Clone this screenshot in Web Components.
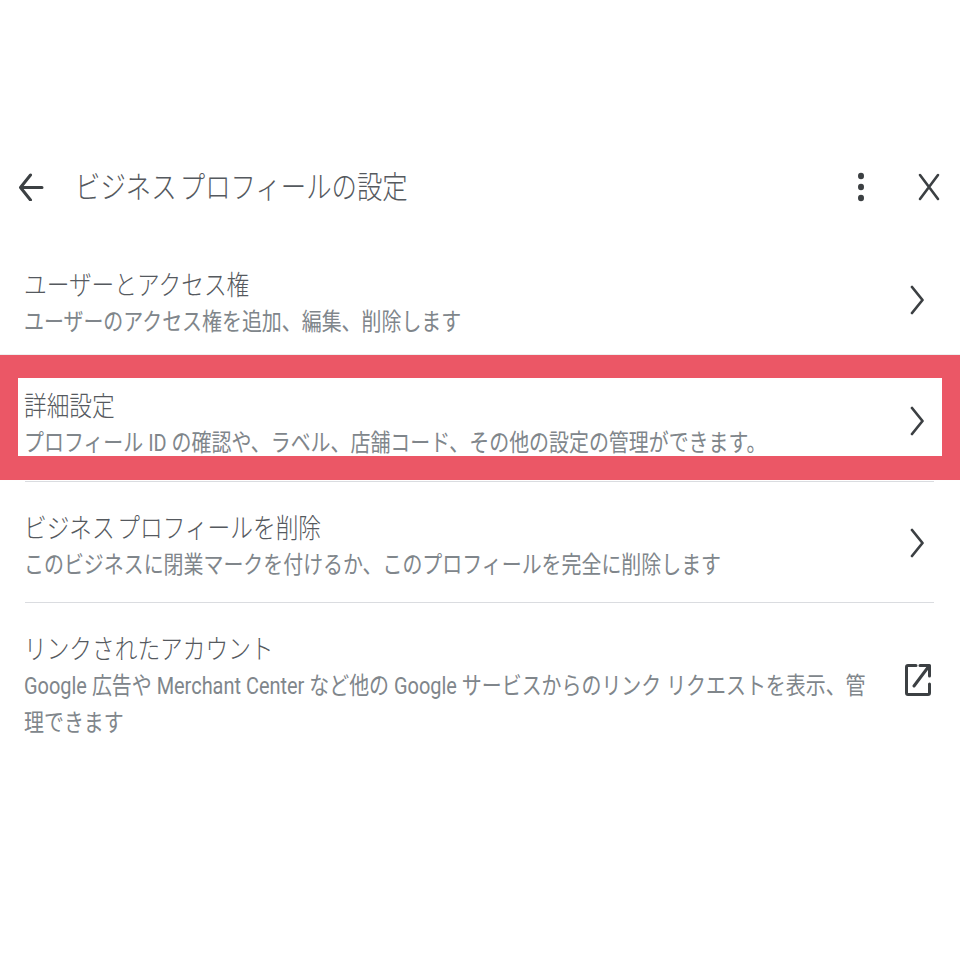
<!DOCTYPE html>
<html lang="ja"><head><meta charset="utf-8"><title>ビジネス プロフィールの設定</title>
<style>html,body{margin:0;background:#fff}body{font-family:Roboto,"Noto Sans CJK JP",sans-serif}</style>
</head><body>
<gbp-panel>
  <gbp-header>ビジネス プロフィールの設定</gbp-header>
  <gbp-row title="ユーザーとアクセス権" sub="ユーザーのアクセス権を追加、編集、削除します"></gbp-row>
  <gbp-row title="詳細設定" sub="プロフィール ID の確認や、ラベル、店舗コード、その他の設定の管理ができます。"></gbp-row>
  <gbp-row title="ビジネス プロフィールを削除" sub="このビジネスに閉業マークを付けるか、このプロフィールを完全に削除します"></gbp-row>
  <gbp-row title="リンクされたアカウント" sub="Google 広告や Merchant Center など他の Google サービスからのリンク リクエストを表示、管理できます" icon="external" last></gbp-row>
  <gbp-highlight></gbp-highlight>
</gbp-panel>
<script>
const shadow=(el,html)=>{el.attachShadow({mode:'open'}).innerHTML=html};
customElements.define('gbp-panel',class extends HTMLElement{connectedCallback(){shadow(this,`<style>
:host{display:block;position:relative;width:960px;height:960px;padding-top:155px;box-sizing:border-box;background:#fff;overflow:hidden}
</style><slot></slot>`)}});
customElements.define('gbp-header',class extends HTMLElement{connectedCallback(){shadow(this,`<style>
:host{display:flex;align-items:center;height:64px;margin-bottom:19.5px;color:#5f6368}
.back{width:28px;height:28px;margin-left:17px;flex:none}
.t{flex:1;margin-left:30px;font-size:25.4px;line-height:64px;font-weight:300;word-spacing:-3px;white-space:nowrap;transform:scaleY(1.22);transform-origin:center;color:#55595e}
.more{width:8px;height:30px;flex:none;margin-right:53px}
.close{width:22px;height:28px;flex:none;margin-right:20px}
svg{display:block;fill:none;stroke:#3c4043;stroke-linecap:round;stroke-linejoin:round}
</style>
<svg class="back" viewBox="0 0 28 28" stroke-width="3"><path d="M25 14.500H4M13.500 2 3.500 14.500 13.500 27"/></svg>
<div class="t"><slot></slot></div>
<svg class="more" viewBox="0 0 8 30" style="fill:#3c4043;stroke:none"><ellipse cx="4" cy="4" rx="3" ry="3.300"/><ellipse cx="4" cy="15" rx="3" ry="3.300"/><ellipse cx="4" cy="26" rx="3" ry="3.300"/></svg>
<svg class="close" viewBox="0 0 22 28" stroke-width="2.600"><path d="M2 2 20 26M20 2 2 26"/></svg>`)}});
customElements.define('gbp-row',class extends HTMLElement{connectedCallback(){
const ext=this.getAttribute('icon')==='external';
const icon=ext?`<svg class="ext" viewBox="0 0 26 34" stroke-width="3"><path d="M11 2.500H3a1.500 1.500 0 0 0-1.500 1.500v26A1.500 1.500 0 0 0 3 31.500h20a1.500 1.500 0 0 0 1.500-1.500v-9"/><path d="M24.500 13V2.500H15M24 3 9 23"/></svg>`
:`<svg class="chev" viewBox="0 0 14 30" stroke-width="2.700"><path d="M2 2 12.500 15 2 28"/></svg>`;
shadow(this,`<style>
:host{display:flex;justify-content:space-between;box-sizing:border-box;height:121.5px;margin:0 26px 0 25px;border-bottom:1px solid #dadce0}
:host([last]){border-bottom:0}
.text{width:845px;margin-left:-1px;padding-top:24.6px;transform:scaleY(1.2);transform-origin:top left}
.title{font-size:22.7px;line-height:29.4px;color:#55595e;font-weight:300;word-spacing:-3px;white-space:nowrap}
.sub{font-size:19.95px;line-height:30.8px;color:#80868b;font-weight:400}
svg{display:block;flex:none;fill:none;stroke:#3c4043;stroke-linecap:round;stroke-linejoin:round}
.chev{width:14px;height:30px;margin:46px 10px 0 0}
.ext{width:26px;height:34px;margin:60px 3px 0 0}
</style><div class="text"><div class="title">${this.getAttribute('title')}</div><div class="sub">${this.getAttribute('sub')}</div></div>${icon}`)}});
customElements.define('gbp-highlight',class extends HTMLElement{connectedCallback(){shadow(this,`<style>
:host{position:absolute;left:0;top:355px;width:960px;height:125px;box-sizing:border-box;border:solid #eb5766;border-width:23px 18px 24px;pointer-events:none;box-shadow:0 -1px 0 #eeeeee}
</style>`)}});
</script>
</body></html>
